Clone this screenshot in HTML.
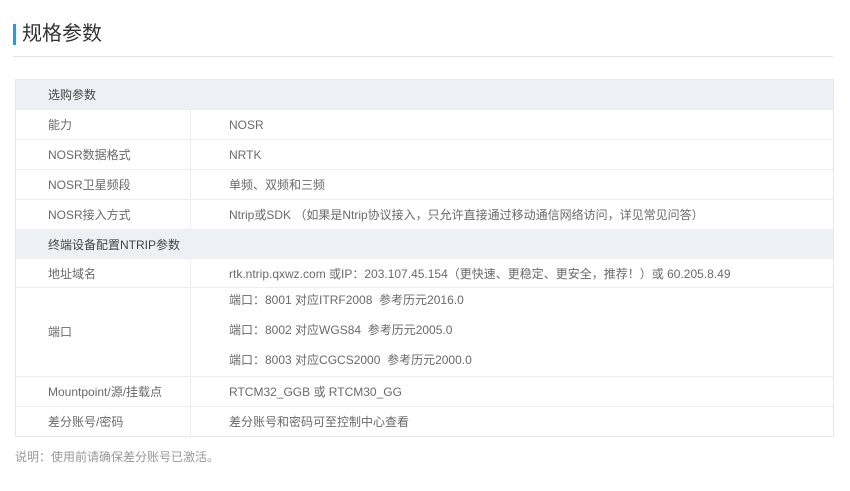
<!DOCTYPE html>
<html><head><meta charset="utf-8"><style>
*{margin:0;padding:0;box-sizing:border-box}
body{width:850px;height:491px;background:#fff;font-family:"Liberation Sans","Noto Sans CJK SC",sans-serif;color:#6a6a6a;font-size:12px;position:relative;overflow:hidden}
.bar{position:absolute;left:13px;top:24px;width:3px;height:21px;background:#1aa0e8}
.title{position:absolute;left:22px;top:21px;font-size:20px;color:#333;line-height:26px}
.hr{position:absolute;left:13px;top:56px;width:820px;height:1px;background:#e4e4e4}
.tbl{position:absolute;left:15px;top:79px;width:819px;border:1px solid #e8e8e8}
.r{position:relative;border-top:1px solid #eee;height:30px}
.r:first-child{border-top:none}
.h{background:#edf1f5;color:#444}
.l{position:absolute;left:32px;top:1px;line-height:29px}
.v{position:absolute;left:213px;top:1px;line-height:29px}
.d{position:absolute;left:174px;top:0;bottom:0;width:1px;background:#eee}
.note{position:absolute;left:15px;top:448px;color:#999;font-size:12px}
</style></head><body>
<div class="bar"></div><div class="title">规格参数</div><div class="hr"></div>
<div class="tbl">
<div class="r h" style="height:29px"><span class="l">选购参数</span></div>
<div class="r"><span class="l">能力</span><div class="d"></div><span class="v">NOSR</span></div>
<div class="r"><span class="l">NOSR数据格式</span><div class="d"></div><span class="v">NRTK</span></div>
<div class="r"><span class="l">NOSR卫星频段</span><div class="d"></div><span class="v">单频、双频和三频</span></div>
<div class="r"><span class="l">NOSR接入方式</span><div class="d"></div><span class="v">Ntrip或SDK （如果是Ntrip协议接入，只允许直接通过移动通信网络访问，详见常见问答）</span></div>
<div class="r h" style="height:29px"><span class="l">终端设备配置NTRIP参数</span></div>
<div class="r" style="height:29px"><span class="l">地址域名</span><div class="d"></div><span class="v">rtk.ntrip.qxwz.com 或IP：203.107.45.154（更快速、更稳定、更安全，推荐！）或 60.205.8.49</span></div>
<div class="r" style="height:89px"><span class="l" style="line-height:89px;top:0">端口</span><div class="d"></div>
<span class="v" style="top:-2px">端口：8001 对应ITRF2008&nbsp; 参考历元2016.0</span>
<span class="v" style="top:28px">端口：8002 对应WGS84&nbsp; 参考历元2005.0</span>
<span class="v" style="top:58px">端口：8003 对应CGCS2000&nbsp; 参考历元2000.0</span></div>
<div class="r"><span class="l">Mountpoint/源/挂载点</span><div class="d"></div><span class="v">RTCM32_GGB 或 RTCM30_GG</span></div>
<div class="r"><span class="l">差分账号/密码</span><div class="d"></div><span class="v">差分账号和密码可至控制中心查看</span></div>
</div>
<div class="note">说明：使用前请确保差分账号已激活。</div>
</body></html>
